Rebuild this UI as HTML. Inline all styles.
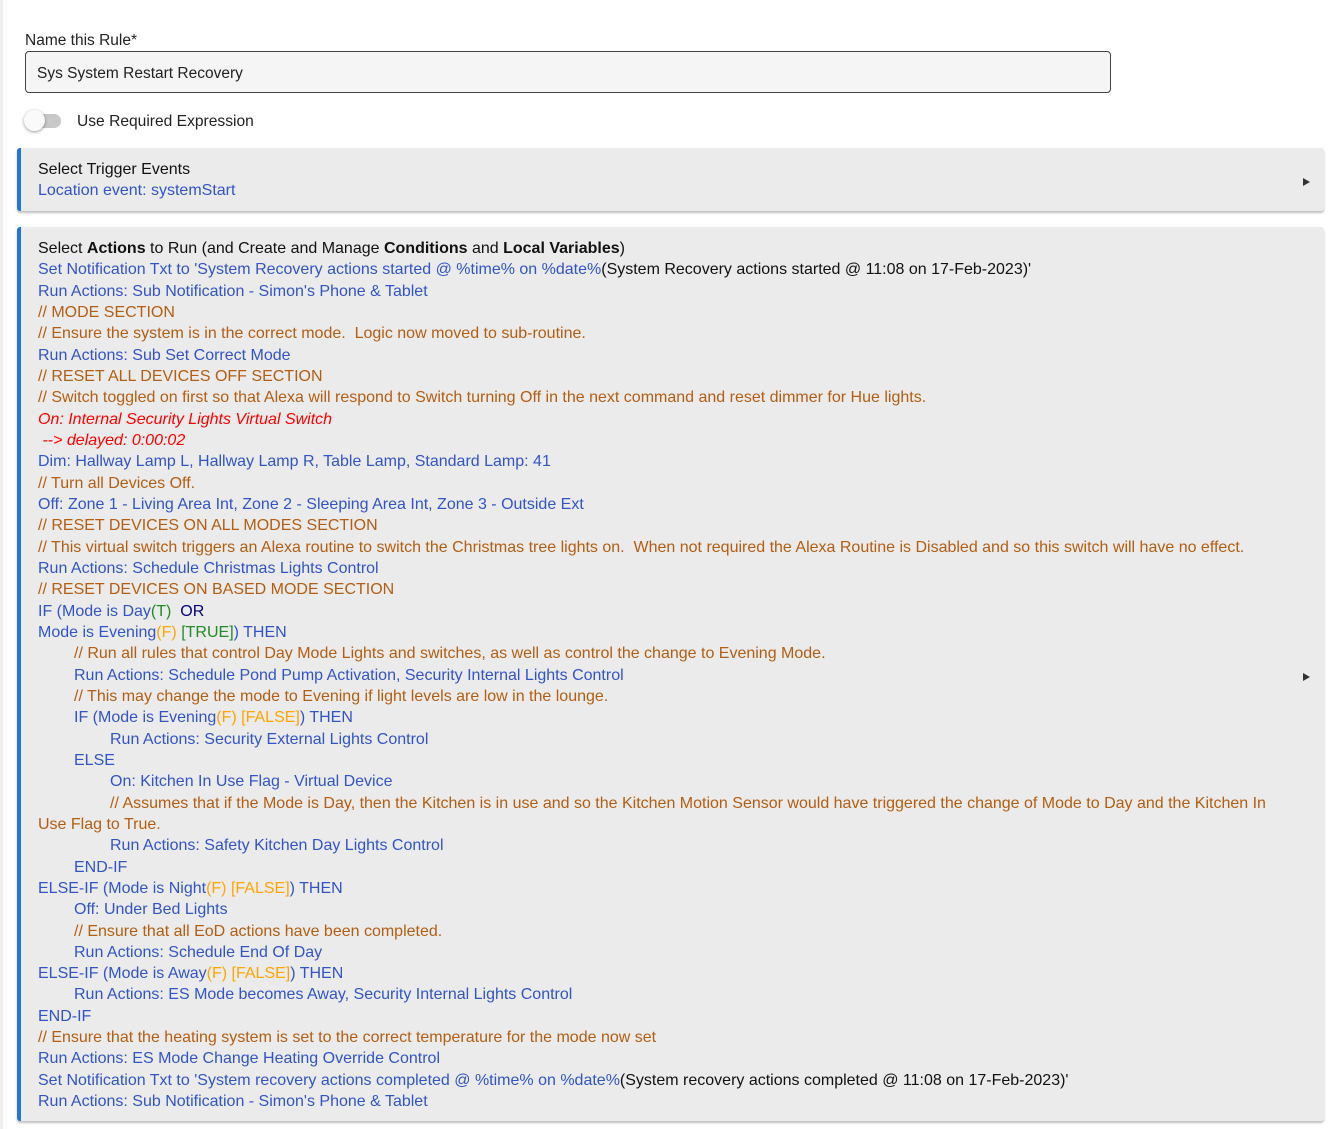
<!DOCTYPE html>
<html><head><meta charset="utf-8"><style>
body{margin:0;background:#fff;font-family:"Liberation Sans",Arial,sans-serif;width:1335px;height:1129px;overflow:hidden;position:relative;color:#222}
.strip{position:absolute;left:0;top:0;width:3px;height:1129px;background:#eee}
.lbl{position:absolute;left:25px;top:32px;font-size:15.5px;color:#222}
.inp{position:absolute;left:25px;top:51px;border:1px solid #444;border-radius:4px;background:#f5f5f5;box-sizing:border-box;width:1086px;height:42px;font-size:15.5px;padding:13px 11px;color:#222}
.tog{position:absolute;left:26px;top:114px;width:35px;height:14px;border-radius:7px;background:#c8c8c8}
.knob{position:absolute;left:24px;top:110px;width:21px;height:21px;border-radius:50%;background:#fafafa;box-shadow:0 1px 3px rgba(0,0,0,.4)}
.tl{position:absolute;left:77px;top:113px;font-size:15.6px;color:#222}
.panel{position:absolute;left:17px;width:1307px;background:#ebebeb;border-left:4px solid #1f77d0;border-radius:3px;box-shadow:0 2px 2px rgba(0,0,0,.25);box-sizing:border-box;padding-left:17px;font-size:16px}
.arr{position:absolute;right:14px;width:0;height:0;border-left:7px solid #333;border-top:4px solid transparent;border-bottom:4px solid transparent}
.l{white-space:nowrap;line-height:21.33px;height:21.33px}
.b{color:#3254c8}.c{color:#b35e12}.r{color:#f00;font-style:italic}.o{color:#ffa500}.g{color:#228b22}.n{color:#000080}.k{color:#111}
.i1{padding-left:36px}.i2{padding-left:72px}
</style></head><body>
<div class="strip"></div>
<div class="lbl">Name this Rule*</div>
<div class="inp">Sys System Restart Recovery</div>
<div class="tog"></div><div class="knob"></div>
<div class="tl">Use Required Expression</div>
<div class="panel" style="top:148px;height:63px;padding-top:11px">
<div class="l k">Select Trigger Events</div>
<div class="l b">Location event: systemStart</div>
<div class="arr" style="top:30px"></div>
</div>
<div class="panel" style="top:227px;height:894px;padding-top:11px">
<div class="arr" style="top:446px"></div>
<div class="l k">Select <b>Actions</b> to Run (and Create and Manage <b>Conditions</b> and <b>Local Variables</b>)</div>
<div class="l"><span class="b">Set Notification Txt to 'System Recovery actions started @ %time% on %date%</span><span class="k">(System Recovery actions started @ 11:08 on 17-Feb-2023)'</span></div>
<div class="l b">Run Actions: Sub Notification - Simon's Phone &amp; Tablet</div>
<div class="l c">// MODE SECTION</div>
<div class="l c">// Ensure the system is in the correct mode.&nbsp; Logic now moved to sub-routine.</div>
<div class="l b">Run Actions: Sub Set Correct Mode</div>
<div class="l c">// RESET ALL DEVICES OFF SECTION</div>
<div class="l c">// Switch toggled on first so that Alexa will respond to Switch turning Off in the next command and reset dimmer for Hue lights.</div>
<div class="l r">On: Internal Security Lights Virtual Switch</div>
<div class="l r">&nbsp;--&gt; delayed: 0:00:02</div>
<div class="l b">Dim: Hallway Lamp L, Hallway Lamp R, Table Lamp, Standard Lamp: 41</div>
<div class="l c">// Turn all Devices Off.</div>
<div class="l b">Off: Zone 1 - Living Area Int, Zone 2 - Sleeping Area Int, Zone 3 - Outside Ext</div>
<div class="l c">// RESET DEVICES ON ALL MODES SECTION</div>
<div class="l c">// This virtual switch triggers an Alexa routine to switch the Christmas tree lights on.&nbsp; When not required the Alexa Routine is Disabled and so this switch will have no effect.</div>
<div class="l b">Run Actions: Schedule Christmas Lights Control</div>
<div class="l c">// RESET DEVICES ON BASED MODE SECTION</div>
<div class="l"><span class="b">IF (Mode is Day</span><span class="g">(T)</span>&nbsp; <span class="n">OR</span></div>
<div class="l"><span class="b">Mode is Evening</span><span class="o">(F)</span> <span class="g">[TRUE]</span><span class="b">) THEN</span></div>
<div class="l c i1">// Run all rules that control Day Mode Lights and switches, as well as control the change to Evening Mode.</div>
<div class="l b i1">Run Actions: Schedule Pond Pump Activation, Security Internal Lights Control</div>
<div class="l c i1">// This may change the mode to Evening if light levels are low in the lounge.</div>
<div class="l i1"><span class="b">IF (Mode is Evening</span><span class="o">(F) [FALSE]</span><span class="b">) THEN</span></div>
<div class="l b i2">Run Actions: Security External Lights Control</div>
<div class="l b i1">ELSE</div>
<div class="l b i2">On: Kitchen In Use Flag - Virtual Device</div>
<div class="l c i2">// Assumes that if the Mode is Day, then the Kitchen is in use and so the Kitchen Motion Sensor would have triggered the change of Mode to Day and the Kitchen In</div>
<div class="l c">Use Flag to True.</div>
<div class="l b i2">Run Actions: Safety Kitchen Day Lights Control</div>
<div class="l b i1">END-IF</div>
<div class="l"><span class="b">ELSE-IF (Mode is Night</span><span class="o">(F) [FALSE]</span><span class="b">) THEN</span></div>
<div class="l b i1">Off: Under Bed Lights</div>
<div class="l c i1">// Ensure that all EoD actions have been completed.</div>
<div class="l b i1">Run Actions: Schedule End Of Day</div>
<div class="l"><span class="b">ELSE-IF (Mode is Away</span><span class="o">(F) [FALSE]</span><span class="b">) THEN</span></div>
<div class="l b i1">Run Actions: ES Mode becomes Away, Security Internal Lights Control</div>
<div class="l b">END-IF</div>
<div class="l c">// Ensure that the heating system is set to the correct temperature for the mode now set</div>
<div class="l b">Run Actions: ES Mode Change Heating Override Control</div>
<div class="l"><span class="b">Set Notification Txt to 'System recovery actions completed @ %time% on %date%</span><span class="k">(System recovery actions completed @ 11:08 on 17-Feb-2023)'</span></div>
<div class="l b">Run Actions: Sub Notification - Simon's Phone &amp; Tablet</div>
</div>
</body></html>
